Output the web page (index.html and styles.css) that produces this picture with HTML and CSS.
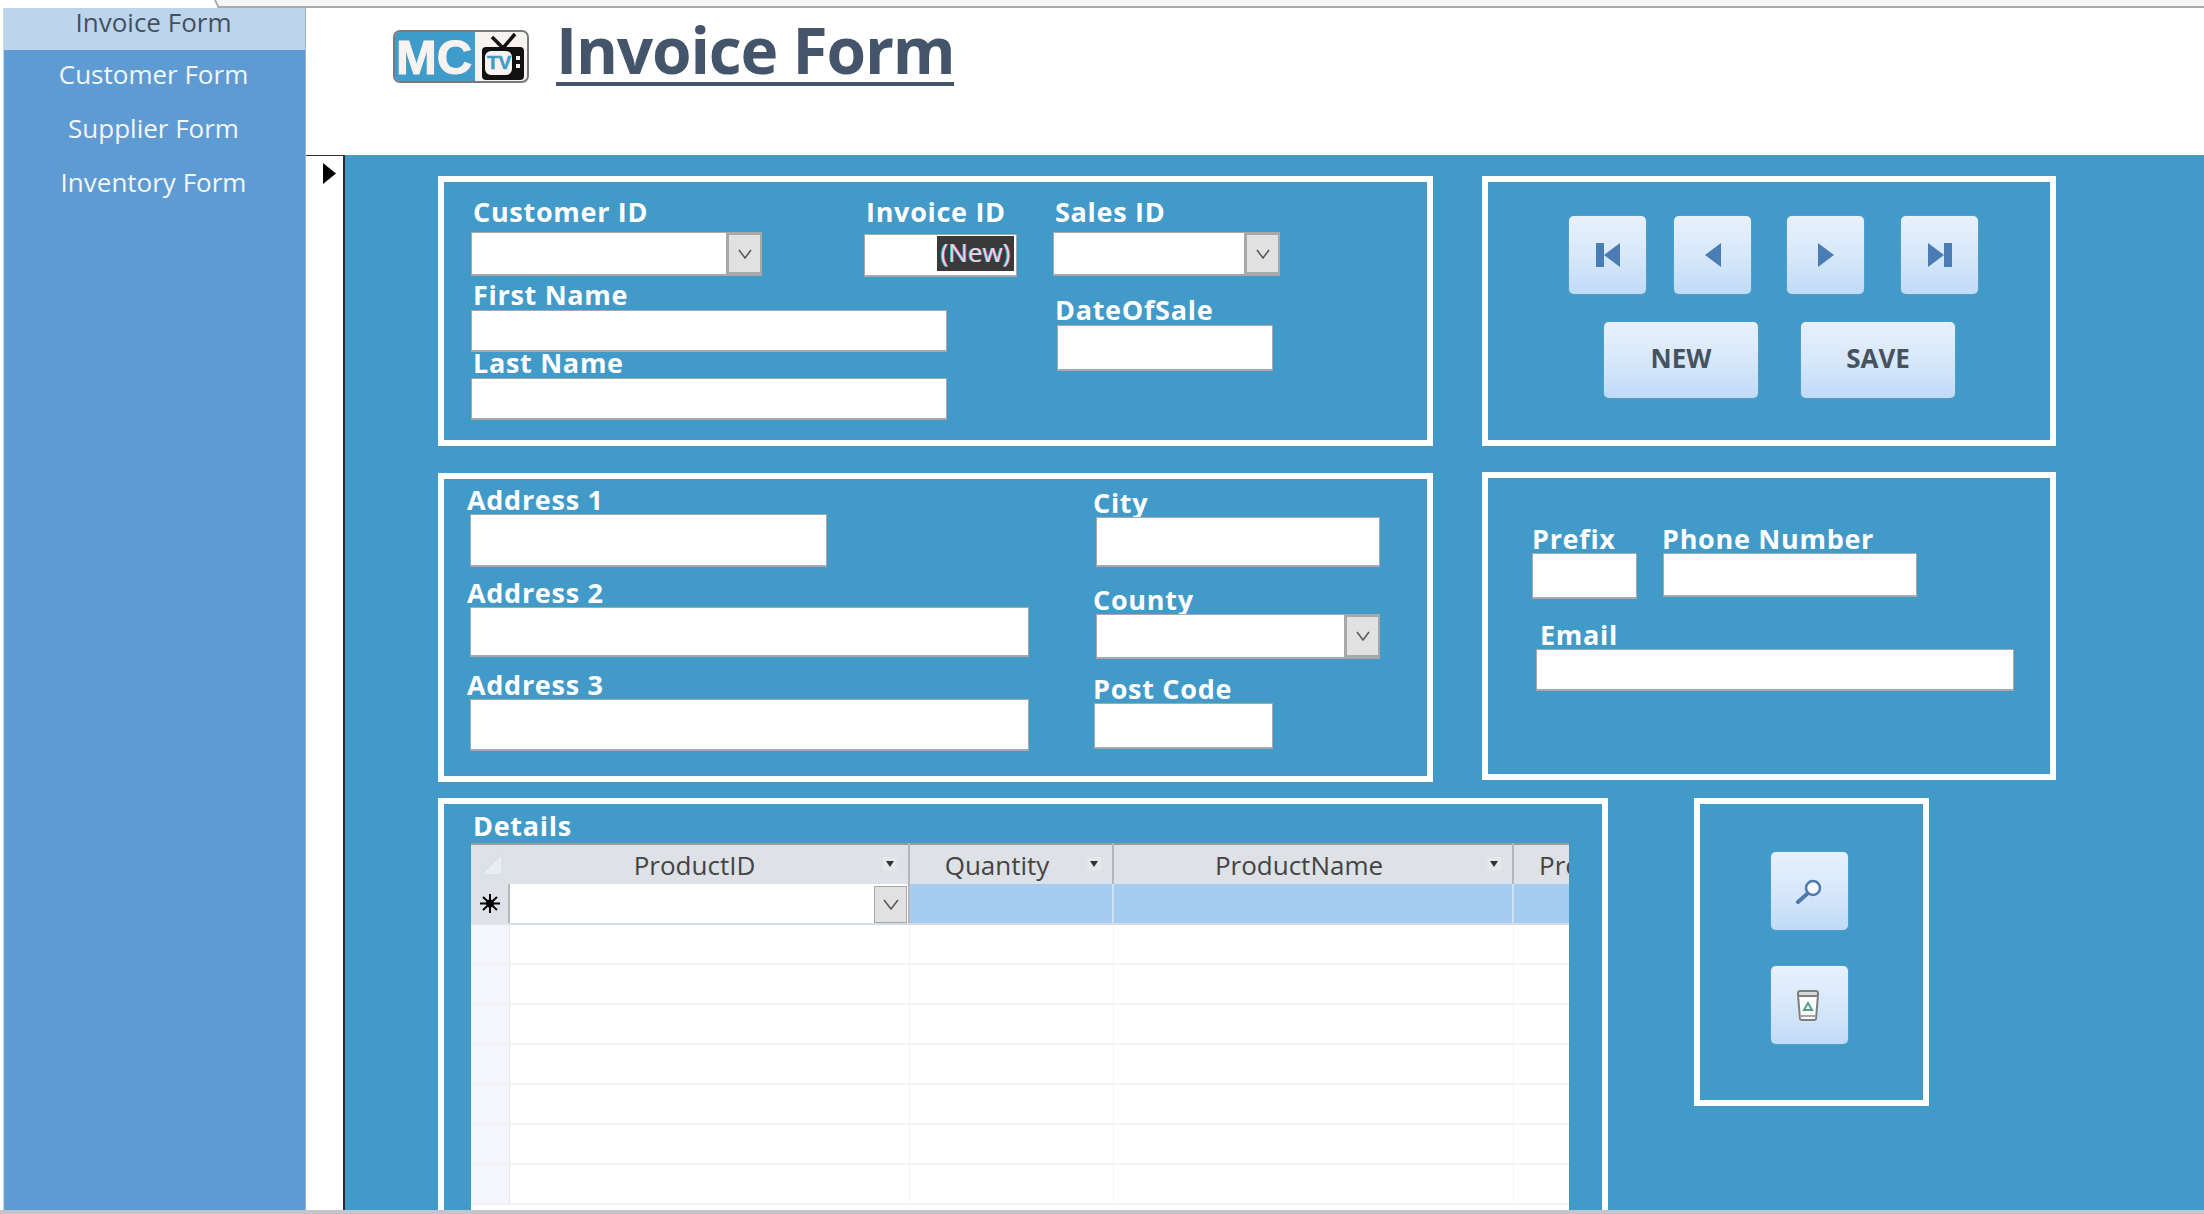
FILE: index.html
```html
<!DOCTYPE html>
<html lang="en">
<head>
  <meta charset="UTF-8">
  <title>Invoice Form</title>
  <link rel="stylesheet" href="styles.css">
</head>
<body>
  <div class="tabstrip"><div class="tab"></div></div>

  <div class="app">
    <nav class="sidebar">
      <a class="nav-item active">Invoice Form</a>
      <a class="nav-item">Customer Form</a>
      <a class="nav-item">Supplier Form</a>
      <a class="nav-item">Inventory Form</a>
    </nav>

    <main class="content">
      <header class="header">
        <svg class="logo" width="136" height="53" viewBox="0 0 136 53">
          <rect x="1" y="1" width="134" height="51" rx="6" fill="#f8f2f0" stroke="#77797c" stroke-width="2"/>
          <path d="M7 2h75v49H7a5 5 0 0 1-5-5V7a5 5 0 0 1 5-5z" fill="#3f9bc9"/>
          <text class="logo-mc" x="3" y="44">MC</text>
          <path d="M99 7l11 11M122 4l-12 14" stroke="#111" stroke-width="3.500" fill="none"/>
          <rect x="89" y="17" width="42" height="33" rx="4" fill="#111"/>
          <rect x="92" y="21" width="27" height="24" rx="6" fill="#f8f2f0"/>
          <text class="logo-tv" x="94" y="39">TV</text>
          <rect x="123" y="26" width="4" height="4" fill="#f8f2f0"/>
          <rect x="123" y="34" width="4" height="4" fill="#f8f2f0"/>
        </svg>
        <h1 class="title">Invoice Form</h1>
      </header>

      <div class="workspace">
        <div class="selector">
          <svg width="13" height="21" viewBox="0 0 13 21"><path d="M0 0l13 10.500L0 21z" fill="#000"/></svg>
        </div>

        <form class="form">
          <div class="panel-row">
            <section class="panel panel-customer">
              <div class="fields">
                <div class="field f-customer-id">
                  <label class="top-label">Customer ID</label>
                  <div class="combo">
                    <input type="text">
                    <span class="combo-btn"><svg width="14" height="10" viewBox="0 0 14 10"><path d="M1 1l6 8 6-8" fill="none" stroke="#555" stroke-width="1.500"/></svg></span>
                  </div>
                </div>
                <div class="field f-invoice-id">
                  <label class="top-label">Invoice ID</label>
                  <div class="autonumber"><span class="new-tag">(New)</span></div>
                </div>
                <div class="field f-sales-id">
                  <label class="top-label">Sales ID</label>
                  <div class="combo">
                    <input type="text">
                    <span class="combo-btn"><svg width="14" height="10" viewBox="0 0 14 10"><path d="M1 1l6 8 6-8" fill="none" stroke="#555" stroke-width="1.500"/></svg></span>
                  </div>
                </div>
              </div>
              <div class="fields names">
                <div class="name-col">
                  <div class="field">
                    <label>First Name</label>
                    <input class="f-name" type="text">
                  </div>
                  <div class="field">
                    <label>Last Name</label>
                    <input class="f-name" type="text">
                  </div>
                </div>
                <div class="field f-date">
                  <label>DateOfSale</label>
                  <input type="text">
                </div>
              </div>
            </section>

            <section class="panel panel-nav">
              <div class="nav-row">
                <button type="button" class="btn btn-icon">
                  <svg width="24" height="24" viewBox="0 0 24 24"><path d="M0 0h8v24H0zM24 0v24L8 12z" fill="#4a7db5"/></svg>
                </button>
                <button type="button" class="btn btn-icon btn-prev">
                  <svg width="16" height="24" viewBox="0 0 16 24"><path d="M16 0v24L0 12z" fill="#4a7db5"/></svg>
                </button>
                <button type="button" class="btn btn-icon btn-next">
                  <svg width="16" height="24" viewBox="0 0 16 24"><path d="M0 0v24l16-12z" fill="#4a7db5"/></svg>
                </button>
                <button type="button" class="btn btn-icon btn-last">
                  <svg width="24" height="24" viewBox="0 0 24 24"><path d="M0 0v24l16-12zM16 0h8v24h-8z" fill="#4a7db5"/></svg>
                </button>
              </div>
              <div class="action-row">
                <button type="button" class="btn btn-text">NEW</button>
                <button type="button" class="btn btn-text">SAVE</button>
              </div>
            </section>
          </div>

          <div class="panel-row row-address">
            <section class="panel panel-address">
              <div class="address-col">
                <div class="field">
                  <label class="label-out">Address 1</label>
                  <input class="f-address1" type="text">
                </div>
                <div class="field f-gap-14">
                  <label class="label-out">Address 2</label>
                  <input class="f-address2" type="text">
                </div>
                <div class="field f-gap-16">
                  <label class="label-out">Address 3</label>
                  <input class="f-address3" type="text">
                </div>
              </div>
              <div class="city-col">
                <div class="field f-city">
                  <label class="label-out">City</label>
                  <input type="text">
                </div>
                <div class="field f-county">
                  <label class="label-out">County</label>
                  <div class="combo">
                    <input type="text">
                    <span class="combo-btn"><svg width="14" height="10" viewBox="0 0 14 10"><path d="M1 1l6 8 6-8" fill="none" stroke="#555" stroke-width="1.500"/></svg></span>
                  </div>
                </div>
                <div class="field f-post">
                  <label>Post Code</label>
                  <input type="text">
                </div>
              </div>
            </section>

            <section class="panel panel-contact">
              <div class="phone-row">
                <div class="field f-prefix">
                  <label>Prefix</label>
                  <input type="text">
                </div>
                <div class="field f-phone">
                  <label>Phone Number</label>
                  <input type="text">
                </div>
              </div>
              <div class="field f-email">
                <label>Email</label>
                <input type="text">
              </div>
            </section>
          </div>

          <div class="panel-row row-details">
            <section class="panel panel-details">
              <label class="details-label">Details</label>
              <div class="grid-wrap">
                <table class="grid">
                  <colgroup>
                    <col class="c-sel"><col class="c-product"><col class="c-qty"><col class="c-product"><col class="c-price">
                  </colgroup>
                  <thead>
                    <tr>
                      <th class="sel-head"><svg width="22" height="22" viewBox="0 0 22 22"><path d="M21 0v21H0z" fill="#e9edf3" stroke="#cfdbe9"/></svg></th>
                      <th><span class="th-text">ProductID</span><i class="sort"></i></th>
                      <th><span class="th-text">Quantity</span><i class="sort"></i></th>
                      <th><span class="th-text">ProductName</span><i class="sort"></i></th>
                      <th class="th-price">ProductPrice</th>
                    </tr>
                  </thead>
                  <tbody>
                    <tr class="new-row">
                      <td class="sel sel-new"><svg width="20" height="19" viewBox="0 0 20 19"><path d="M10 0v19M0 9.500h20M3 3l14 13M17 3L3 16" stroke="#000" stroke-width="2" fill="none"/><circle cx="10" cy="9.500" r="4" fill="#000"/></svg></td>
                      <td class="cell-combo">
                        <span class="combo-btn"><svg width="16" height="11" viewBox="0 0 16 11"><path d="M1 1l7 9 7-9" fill="none" stroke="#555" stroke-width="1.500"/></svg></span>
                      </td>
                      <td></td><td></td><td></td>
                    </tr>
                    <tr><td class="sel"></td><td></td><td></td><td></td><td></td></tr>
                    <tr><td class="sel"></td><td></td><td></td><td></td><td></td></tr>
                    <tr><td class="sel"></td><td></td><td></td><td></td><td></td></tr>
                    <tr><td class="sel"></td><td></td><td></td><td></td><td></td></tr>
                    <tr><td class="sel"></td><td></td><td></td><td></td><td></td></tr>
                    <tr><td class="sel"></td><td></td><td></td><td></td><td></td></tr>
                    <tr><td class="sel"></td><td></td><td></td><td></td><td></td></tr>
                  </tbody>
                </table>
              </div>
            </section>

            <section class="panel panel-tools">
              <button type="button" class="btn btn-icon">
                <svg class="icon-search" width="28" height="25" viewBox="0 0 28 25">
                  <circle cx="18" cy="9" r="7" fill="#f4f8fd" stroke="#4a7ab0" stroke-width="2.500"/>
                  <path d="M12 15L3 23" stroke="#4a7ab0" stroke-width="4" stroke-linecap="round"/>
                </svg>
              </button>
              <button type="button" class="btn btn-icon btn-trash">
                <svg class="icon-trash" width="24" height="31" viewBox="0 0 24 31">
                  <path d="M2 5h20l-2 24a2 2 0 0 1-2 1H6a2 2 0 0 1-2-1z" fill="#fdfdfd" stroke="#7f7f7f" stroke-width="2"/>
                  <rect x="2" y="1" width="20" height="5" rx="2" fill="#d9d9d9" stroke="#7f7f7f" stroke-width="2"/>
                  <path d="M12 13l4 7H8z" fill="none" stroke="#4f9f8a" stroke-width="2"/>
                  <path d="M5 26h14" stroke="#a6a6a6" stroke-width="2"/>
                </svg>
              </button>
            </section>
          </div>
        </form>
      </div>
    </main>
  </div>

  <div class="statusbar"></div>
</body>
</html>
```

FILE: styles.css
```css
:root {
  --form-blue: #429ac9;
  --side-blue: #5f9bd3;
  --label-font: 'Open Sans', sans-serif;
  --slate: #44546a;
}

html, body {
  margin: 0;
  padding: 0;
}

body {
  width: 2204px;
  height: 1214px;
  overflow: hidden;
  background: #fff;
  font-family: var(--label-font);
  display: flex;
  flex-direction: column;
}

/* top strip */
.tabstrip {
  height: 8px;
  flex: none;
  overflow: hidden;
}

.tab {
  height: 6px;
  margin-left: 214px;
  background: #f6f6f6;
  border-bottom: 2px solid #a9abae;
  border-left: 2px solid #a9abae;
  transform: skewX(25deg);
  transform-origin: top left;
}

.app {
  flex: 1;
  display: flex;
  min-height: 0;
}

.statusbar {
  height: 4px;
  flex: none;
  background: #c5c5c9;
}

/* sidebar */
.sidebar {
  width: 301px;
  margin-left: 3px;
  flex: none;
  background: var(--side-blue);
  border-left: 1px solid #c9d9ea;
  border-right: 1px solid #a3b3c4;
}

.nav-item {
  display: block;
  height: 54px;
  line-height: 48px;
  padding-right: 2px;
  text-align: center;
  font-size: 26px;
  color: #f2f7fc;
}

.nav-item.active {
  height: 42px;
  line-height: 29px;
  background: #bdd5ec;
  color: #44505e;
}

/* header */
.content {
  flex: 1;
  min-width: 0;
  display: flex;
  flex-direction: column;
}

.header {
  height: 147px;
  flex: none;
  display: flex;
  align-items: flex-start;
  padding-left: 87px;
}

.logo {
  margin-top: 22px;
}

.logo-mc {
  font-family: 'Liberation Sans', sans-serif;
  font-weight: 700;
  font-size: 49px;
  fill: #f8f2f0;
  stroke: #f8f2f0;
  stroke-width: 1;
}

.logo-tv {
  font-family: 'Liberation Sans', sans-serif;
  font-weight: 700;
  font-size: 19px;
  fill: #3f9bc9;
  stroke: #3f9bc9;
  stroke-width: 0.5;
}

.title {
  margin: 0 0 0 27px;
  height: 78px;
  line-height: 84px;
  font-size: 64px;
  font-weight: 700;
  letter-spacing: -1.2px;
  color: var(--slate);
  border-bottom: 4px solid var(--slate);
  box-sizing: border-box;
}

/* record selector + form */
.workspace {
  flex: 1;
  min-height: 0;
  display: flex;
}

.selector {
  width: 20px;
  flex: none;
  padding: 7px 0 0 17px;
  background: #fff;
  border-top: 1px solid #333;
  border-right: 2px solid #2b2b2b;
}

.form {
  flex: 1;
  min-width: 0;
  overflow: hidden;
  background: var(--form-blue);
  padding: 21px 0 0 93px;
}

.panel-row {
  display: flex;
  align-items: flex-start;
}

.panel {
  border: 6px solid #fff;
  box-sizing: border-box;
}

.row-address {
  margin-top: 27px;
}

.row-details {
  margin-top: 16px;
}

/* fields */
.field {
  display: flex;
  flex-direction: column;
}

.field label,
.details-label {
  display: block;
  height: 26px;
  line-height: 24px;
  font-size: 27px;
  font-weight: 700;
  letter-spacing: 0.7px;
  color: #fff;
  white-space: nowrap;
}

.field label {
  margin-left: 2px;
}

.field label.top-label {
  margin-bottom: 6px;
}

.field label.label-out {
  margin-left: -3px;
}

input {
  display: block;
  width: 100%;
  height: 100%;
  margin: 0;
  padding: 0;
  box-sizing: border-box;
  background: #fff;
  border: 1px solid #a8a8a8;
  border-bottom-width: 2px;
  border-radius: 0;
}

.combo {
  display: flex;
  height: 44px;
  box-sizing: border-box;
}

.combo input {
  flex: 1;
  min-width: 0;
}

.combo-btn {
  flex: none;
  width: 35px;
  display: flex;
  align-items: center;
  justify-content: center;
  box-sizing: border-box;
  background: #e1e1e1;
  border: 3px solid #a8a8a8;
  border-width: 3px 2px 4px 2px;
}

.fields {
  display: flex;
  align-items: flex-start;
}

/* customer panel */
.panel-customer {
  width: 995px;
  height: 270px;
  padding: 18px 0 0 27px;
}

.f-customer-id {
  width: 291px;
}

.f-invoice-id {
  width: 153px;
  margin-left: 102px;
}

.f-invoice-id label.top-label {
  margin-bottom: 8px;
}

.f-sales-id {
  width: 227px;
  margin-left: 36px;
}

.autonumber {
  height: 43px;
  box-sizing: border-box;
  display: flex;
  justify-content: flex-end;
  background: #fff;
  border: 1px solid #a8a8a8;
  border-bottom-width: 2px;
  padding: 1px 2px 4px 0;
}

.new-tag {
  width: 77px;
  background: #3a3a3a;
  color: #dcdcdc;
  font-size: 26px;
  line-height: 33px;
  text-align: center;
  text-shadow: 0.6px 0 #c93bd0, -0.6px 0 #3cc8d0;
}

.names {
  margin-top: 7px;
}

.names label {
  line-height: 22px;
}

.name-col {
  width: 476px;
}

.f-name {
  height: 42px;
}

.f-date {
  width: 216px;
  margin: 15px 0 0 110px;
}

.f-date label {
  margin-left: -2px;
}

.f-date input {
  height: 46px;
}

/* nav panel */
.panel-nav {
  width: 574px;
  height: 270px;
  margin-left: 49px;
  padding: 34px 0 0 81px;
}

.btn {
  display: flex;
  align-items: center;
  justify-content: center;
  flex: none;
  margin: 0;
  padding: 0;
  border: 0;
  border-radius: 5px;
  background: linear-gradient(#e8f1fc, #d8e8fa 50%, #c0dbf7);
  box-shadow: 0 0 1px rgba(255, 255, 255, 0.6);
}

.btn-icon {
  width: 77px;
  height: 78px;
}

.nav-row {
  display: flex;
}

.btn-prev {
  margin-left: 28px;
}

.btn-next {
  margin-left: 36px;
}

.btn-last {
  margin-left: 37px;
}

.action-row {
  display: flex;
  gap: 43px;
  margin: 28px 0 0 35px;
}

.btn-text {
  width: 154px;
  height: 76px;
  padding-bottom: 4px;
  font-family: var(--label-font);
  font-size: 26px;
  font-weight: 700;
  color: #47525f;
}

/* address panel */
.panel-address {
  width: 995px;
  height: 309px;
  display: flex;
  padding: 9px 0 0 26px;
}

.address-col {
  width: 559px;
}

.f-address1 {
  width: 357px;
  height: 53px;
}

.f-address2 {
  height: 50px;
}

.f-address3 {
  height: 52px;
}

.f-gap-14 {
  margin-top: 14px;
}

.f-gap-16 {
  margin-top: 16px;
}

.city-col {
  margin-left: 65px;
  width: 286px;
  padding-top: 3px;
}

.f-city {
  margin-left: 2px;
}

.f-city input {
  height: 50px;
}

.f-county {
  margin: 21px 0 0 2px;
}

.f-county .combo {
  height: 45px;
}

.f-post {
  margin-top: 18px;
  width: 179px;
}

.f-post label {
  margin-left: -1px;
}

.f-post input {
  height: 46px;
}

/* contact panel */
.panel-contact {
  width: 574px;
  height: 308px;
  margin: -1px 0 0 49px;
  padding: 49px 0 0 44px;
}

.phone-row {
  display: flex;
  align-items: flex-start;
}

.f-prefix {
  width: 105px;
}

.f-prefix label {
  margin-left: 0;
}

.f-prefix input {
  height: 46px;
}

.f-phone {
  width: 254px;
  margin-left: 26px;
}

.f-phone label {
  margin-left: -1px;
}

.f-phone input {
  height: 44px;
}

.f-email {
  width: 478px;
  margin: 24px 0 0 4px;
}

.f-email label {
  margin-left: 4px;
}

.f-email input {
  height: 42px;
}

/* details panel */
.panel-details {
  width: 1170px;
  height: 460px;
  padding: 10px 0 0 27px;
}

.details-label {
  margin-left: 2px;
}

.grid-wrap {
  width: 1098px;
  height: 420px;
  margin-top: 3px;
  overflow: hidden;
  background: #fff;
}

.grid {
  width: 1144px;
  table-layout: fixed;
  border-collapse: collapse;
  background: #fff;
}

.c-sel {
  width: 38px;
}

.c-product {
  width: 400px;
}

.c-qty {
  width: 204px;
}

.c-price {
  width: 102px;
}

.grid th {
  position: relative;
  height: 40px;
  padding: 0 28px 0 0;
  box-sizing: border-box;
  background: #dee1e6;
  border-top: 2px solid #9a9a9a;
  border-right: 2px solid #b4b6ba;
  font-size: 26px;
  line-height: 32px;
  font-weight: 400;
  color: #444;
  text-align: center;
  white-space: nowrap;
}

.grid th.sel-head {
  padding: 0;
  border-right: 0;
}

.sel-head svg {
  display: block;
  margin-left: 10px;
}

.grid th.th-price {
  padding: 0 0 0 25px;
  text-align: left;
  overflow: hidden;
}

/* little sort arrow on a pale chip, sits over the header cell */
.sort {
  position: absolute;
  right: 11px;
  top: 12px;
  width: 14px;
  height: 14px;
  background: #e6e8ec;
  border-radius: 2px;
}

.sort::after {
  content: "";
  position: absolute;
  left: 3px;
  top: 4px;
  border-left: 4px solid transparent;
  border-right: 4px solid transparent;
  border-top: 6px solid #333;
}

.grid td {
  height: 40px;
  padding: 0;
  box-sizing: border-box;
  border-bottom: 2px solid #f3f3f3;
  border-right: 1px solid #f5f5f5;
}

.grid td.sel {
  background: #f5f6fd;
  border-right: 1px solid #e6e7ee;
}

.grid td.sel-new {
  background: #dee1e6;
  border-bottom: 2px solid #e1e3e7;
  border-right: 2px solid #b4b6ba;
  text-align: center;
}

.sel-new svg {
  display: block;
  margin: 0 auto;
}

.new-row td {
  background: #a6cdef;
  border-bottom: 2px solid #d4dde6;
  border-right: 2px solid #d0e3f5;
}

.new-row td.cell-combo {
  background: #fff;
  border-right: 2px solid #b4b6ba;
  vertical-align: bottom;
}

.cell-combo .combo-btn {
  width: 33px;
  height: 37px;
  margin-left: auto;
  margin-right: 1px;
  border-width: 1px;
  border-color: #a8a8a8;
}

/* search + delete panel */
.panel-tools {
  width: 235px;
  height: 308px;
  margin-left: 86px;
  padding: 48px 0 0 71px;
}

.btn-trash {
  margin-top: 36px;
}

.icon-search {
  margin-right: 2px;
}

.icon-trash {
  margin-right: 4px;
}
```
